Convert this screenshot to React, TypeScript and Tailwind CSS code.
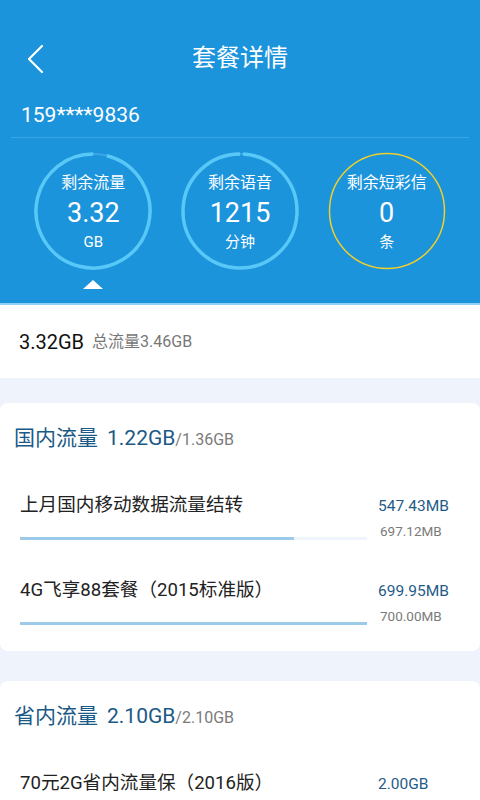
import React from 'react';

const font = { fontFamily: 'Roboto, "Noto Sans CJK SC", sans-serif' };

type Ring = { label: string; value: string; unit: string; kind: 'arc' | 'plain'; percent?: number; start?: number };

const rings: Ring[] = [
  { label: '剩余流量', value: '3.32', unit: 'GB', kind: 'arc', percent: 0.96, start: 14 },
  { label: '剩余语音', value: '1215', unit: '分钟', kind: 'arc', percent: 0.99, start: 3 },
  { label: '剩余短彩信', value: '0', unit: '条', kind: 'plain' },
];

const RingCircle: React.FC<{ ring: Ring }> = ({ ring }) => {
  const r = 57;
  const c = 2 * Math.PI * r;
  return (
    <div className="relative w-[118px] h-[118px] flex flex-col items-center text-white">
      <svg className="absolute inset-0" width="118" height="118" viewBox="0 0 118 118">
        {ring.kind === 'arc' ? (
          <>
            <circle cx="59" cy="59" r={r} fill="none" stroke="#3aa6e6" strokeWidth="2" />
            <circle
              cx="59"
              cy="59"
              r={r}
              fill="none"
              stroke="#58c8f6"
              strokeWidth="3.5"
              strokeDasharray={`${c * (ring.percent ?? 1)} ${c}`}
              transform={`rotate(${-90 + (ring.start ?? 0)} 59 59)`}
            />
          </>
        ) : (
          <circle cx="59" cy="59" r="57.5" fill="none" stroke="#f0cf2a" strokeWidth="1.5" />
        )}
      </svg>
      <div className="mt-[20px] h-[22px] leading-[22px] text-[16px]">{ring.label}</div>
      <div className="mt-[3px] h-[32px] leading-[32px] text-[27px]">{ring.value}</div>
      <div className="mt-[3px] h-[20px] leading-[20px] text-[15px]">{ring.unit}</div>
    </div>
  );
};

type Item = { name: string; used: string; total: string; percent: number; showBar?: boolean };

const UsageRow: React.FC<{ item: Item; first?: boolean }> = ({ item, first }) => (
  <div className={`flex px-[20px] ${first ? '' : 'mt-[38px]'}`}>
    <div className="flex-1">
      <div className="h-[24px] leading-[24px] text-[18.6px] text-[#222]">{item.name}</div>
      {item.showBar !== false && (
        <div className="mt-[20px] h-[3px] bg-[#eef5fc]">
          <div className="h-full bg-[#9ccbea]" style={{ width: `${item.percent * 100}%` }} />
        </div>
      )}
    </div>
    <div className="w-[82px] ml-[11px] pt-[3px]">
      <div className="h-[20px] leading-[20px] text-[15.5px] text-[#1f5b88]">{item.used}</div>
      <div className="mt-[6px] pl-[2px] h-[18px] leading-[18px] text-[13.5px] text-[#7b7b7b]">{item.total}</div>
    </div>
  </div>
);

const Card: React.FC<{ title: string; used: string; total: string; items: Item[]; className?: string }> = ({ title, used, total, items, className }) => (
  <div className={`bg-white rounded-[8px] pt-[21px] pb-[26px] ${className ?? ''}`}>
    <div className="flex items-baseline pl-[14px] h-[28px] leading-[28px]">
      <span className="text-[21px] text-[#1b5a86]">{title}</span>
      <span className="ml-[9px] text-[21px] text-[#1b5a86]">{used}</span>
      <span className="text-[16px] text-[#7b7b7b]">/{total}</span>
    </div>
    <div className="mt-[41px]">
      {items.map((it, i) => (
        <UsageRow key={i} item={it} first={i === 0} />
      ))}
    </div>
  </div>
);

const App: React.FC = () => {
  return (
    <div className="w-[480px] h-[800px] overflow-hidden bg-[#eff4fc]" style={font}>
      <header className="bg-[#1b94dc] pb-[14px]">
        <div className="relative pt-[38px] h-[78px] flex items-center justify-center">
          <svg className="absolute left-[26px] top-[44px]" width="20" height="30" viewBox="0 0 20 30">
            <path d="M16 2 L3 15 L16 28" fill="none" stroke="white" strokeWidth="2.2" strokeLinecap="round" strokeLinejoin="round" />
          </svg>
          <h1 className="text-white text-[24px] leading-[40px]">套餐详情</h1>
        </div>
        <div className="mt-[25px] pl-[21px] h-[24px] leading-[24px] text-[21px] text-white">159****9836</div>
        <div className="mt-[10px] mx-[11px] h-px bg-[#3aa3e2]" />
        <div className="mt-[14px] grid grid-cols-3 px-[20px]">
          {rings.map((r, i) => (
            <div key={i} className="flex justify-center">
              <RingCircle ring={r} />
            </div>
          ))}
        </div>
        <div className="mt-[10px] grid grid-cols-3 px-[20px]">
          <div className="flex justify-center">
            <div className="w-0 h-0 border-l-[10px] border-r-[10px] border-b-[9px] border-l-transparent border-r-transparent border-b-white" />
          </div>
        </div>
      </header>
      <div className="h-[2px] bg-[#8ed2f5]" />
      <div className="bg-white h-[73px] flex items-center pl-[19px]">
        <span className="text-[20px] text-[#111]">3.32GB</span>
        <span className="ml-[8px] text-[16px] text-[#777]">总流量3.46GB</span>
      </div>
      <Card
        className="mt-[25px]"
        title="国内流量"
        used="1.22GB"
        total="1.36GB"
        items={[
          { name: '上月国内移动数据流量结转', used: '547.43MB', total: '697.12MB', percent: 0.79 },
          { name: '4G飞享88套餐（2015标准版）', used: '699.95MB', total: '700.00MB', percent: 1 },
        ]}
      />
      <Card
        className="mt-[30px]"
        title="省内流量"
        used="2.10GB"
        total="2.10GB"
        items={[{ name: '70元2G省内流量保（2016版）', used: '2.00GB', total: '2.00GB', percent: 0.95 }]}
      />
    </div>
  );
};

export default App;
